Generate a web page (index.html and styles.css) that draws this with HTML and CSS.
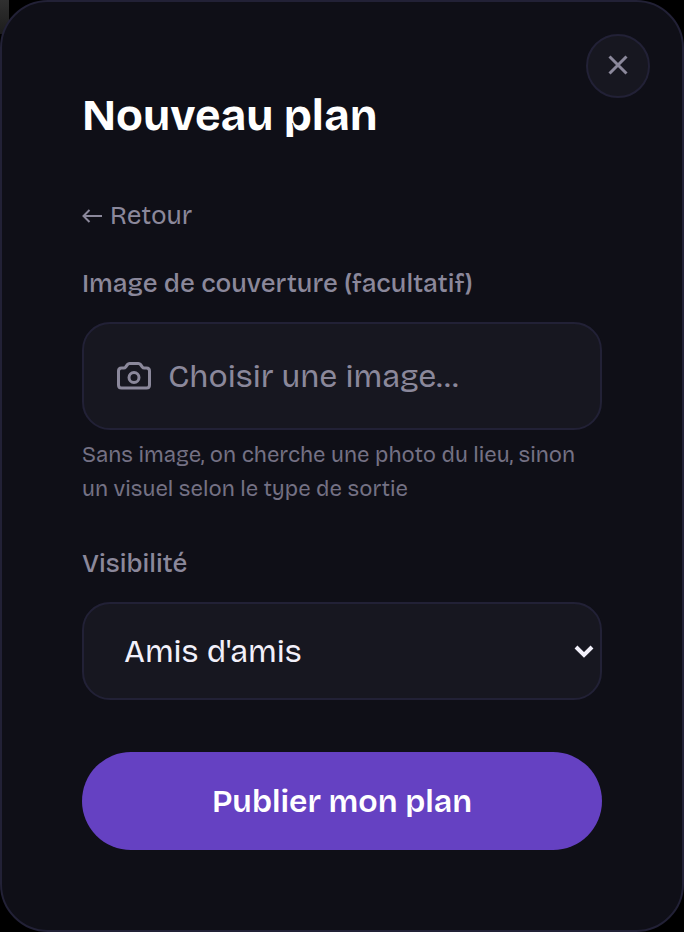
FILE: index.html
```html
<!DOCTYPE html>
<html lang="fr">
<head>
<meta charset="utf-8">
<meta name="viewport" content="width=device-width, initial-scale=1">
<title>Nouveau plan</title>
<link rel="stylesheet" href="styles.css">
</head>
<body>
<main class="dialog" role="dialog" aria-labelledby="title">
  <button class="close" type="button" aria-label="Fermer">
    <svg viewBox="0 0 20 20" aria-hidden="true"><path d="M1.5 1.5 18.5 18.5M18.5 1.5 1.5 18.5"/></svg>
  </button>
  <h1 class="title" id="title">Nouveau plan</h1>
  <form class="form">
    <button class="back" type="button">
      <svg viewBox="0 0 20 14" aria-hidden="true"><path d="M20 7H1.500M7.500 1 1.500 7l6 6"/></svg>
      <span>Retour</span>
    </button>
    <div class="field">
      <label class="label" for="cover">Image de couverture (facultatif)</label>
      <button class="picker" id="cover" type="button">
        <svg viewBox="0 0 36 32" aria-hidden="true"><path d="M13.500 3.500h9q1.200 0 2 1l1.800 2.500q.8 1 2 1H30.500q3 0 3 3V25q0 3-3 3H5.500q-3 0-3-3V11q0-3 3-3h2.200q1.200 0 2-1l1.800-2.500q.8-1 2-1z"/><circle cx="18" cy="17.500" r="5"/></svg>
        <span>Choisir une image…</span>
      </button>
      <p class="hint">Sans image, on cherche une photo du lieu, sinon un visuel selon le type de sortie</p>
    </div>
    <div class="field">
      <label class="label" for="visibility">Visibilité</label>
      <div class="select-wrap">
        <select class="select" id="visibility"><option>Amis d'amis</option></select>
        <svg viewBox="0 0 20 14" aria-hidden="true"><path d="m2 3 8 8 8-8"/></svg>
      </div>
    </div>
    <button class="submit" type="submit">Publier mon plan</button>
  </form>
</main>
</body>
</html>
```
FILE: styles.css
```css
* {
  box-sizing: border-box;
}

body {
  margin: 0;
  background: linear-gradient(#303030, #1c1c1c) 0 0 / 9px 34px no-repeat #000;
  font-family: "Bricolage Grotesque", Inter, "Liberation Sans", sans-serif;
}

svg {
  flex: none;
  fill: none;
  stroke: currentColor;
}

button,
select {
  margin: 0;
  font: inherit;
}

button {
  cursor: pointer;
}

.dialog {
  position: relative;
  min-height: 100vh;
  padding: 80px;
  background: #0f0f17;
  border: 2px solid #222136;
  border-radius: 48px;
}

.close {
  position: absolute;
  top: 32px;
  right: 32px;
  display: grid;
  place-items: center;
  width: 64px;
  height: 64px;
  padding: 0 0 2px;
  color: #8b889b;
  background: #171720;
  border: 2px solid #222136;
  border-radius: 50%;
}

.close svg {
  width: 20px;
  height: 20px;
  stroke-width: 3;
}

.title {
  margin: 0 0 46px;
  color: #fff;
  font-size: 44px;
  font-weight: 700;
  line-height: 68px;
}

.form {
  display: flex;
  flex-direction: column;
}

.back {
  display: flex;
  align-items: center;
  align-self: flex-start;
  gap: 8px;
  margin-bottom: 28px;
  padding: 0;
  color: #8b889b;
  background: none;
  border: 0;
  font-size: 26px;
  line-height: 40px;
}

.back svg {
  width: 20px;
  height: 14px;
  stroke-width: 2;
}

.field {
  display: flex;
  flex-direction: column;
  margin-bottom: 38px;
}

.label {
  margin-bottom: 18px;
  color: #8b889b;
  font-size: 26px;
  font-weight: 500;
  line-height: 40px;
}

.picker {
  display: flex;
  align-items: center;
  gap: 16px;
  height: 108px;
  padding: 0 32px;
  color: #8b889b;
  background: #171720;
  border: 2px solid #222136;
  border-radius: 28px;
  font-size: 32px;
}

.picker svg {
  width: 36px;
  height: 32px;
  stroke-width: 3;
}

.hint {
  margin: 8px 0 0;
  color: #747184;
  font-size: 22px;
  line-height: 34px;
}

.select-wrap {
  position: relative;
}

.select {
  display: block;
  width: 100%;
  height: 98px;
  padding: 0 40px;
  color: #f2f0fa;
  background: #171720;
  border: 2px solid #222136;
  border-radius: 28px;
  font-size: 32px;
  appearance: none;
}

.select-wrap svg {
  position: absolute;
  top: 42px;
  right: 8px;
  width: 20px;
  height: 14px;
  color: #f2f0fa;
  stroke-width: 4;
  pointer-events: none;
}

.submit {
  height: 98px;
  margin-top: 14px;
  padding: 0 32px;
  color: #fff;
  background: #6541c2;
  border: 0;
  border-radius: 49px;
  font-size: 32px;
  font-weight: 600;
}
```
